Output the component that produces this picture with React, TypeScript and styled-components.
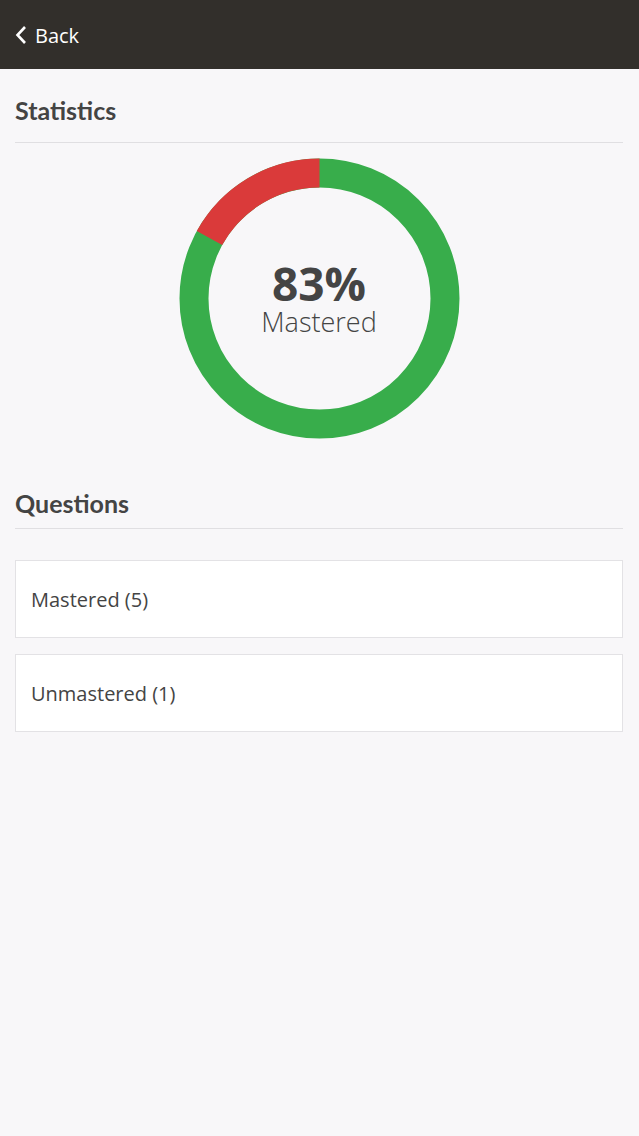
import { styled, createGlobalStyle } from "styled-components";

const GlobalStyle = createGlobalStyle`
  html, body {
    margin: 0;
    padding: 0;
    background: #f8f7f9;
  }
  body {
    font-family: "Open Sans", "Liberation Sans", sans-serif;
    color: #444;
  }
`;

const Donut = ({ percent }: { percent: number }) => {
  const r = 125.5;
  const c = 2 * Math.PI * r;
  const miss = c * (1 - percent / 100);
  return (
    <DonutWrap>
      <svg width="281" height="281" viewBox="0 0 281 281">
        <circle cx="140.5" cy="140.5" r={r} fill="none" stroke="#38ad4b" strokeWidth="29" />
        <circle
          cx="140.5"
          cy="140.5"
          r={r}
          fill="none"
          stroke="#da3a3a"
          strokeWidth="29"
          strokeDasharray={`${miss} ${c}`}
          transform="rotate(-90 140.5 140.5) scale(1 -1) translate(0 -281)"
        />
      </svg>
      <DonutLabel>
        <Percent>{percent}%</Percent>
        <Caption>Mastered</Caption>
      </DonutLabel>
    </DonutWrap>
  );
};

const App = () => {
  return (
    <Page>
      <GlobalStyle />
      <TopBar>
        <BackButton>
          <svg width="12" height="20" viewBox="0 0 12 20">
            <path d="M10 2 L2.5 10 L10 18" fill="none" stroke="#fff" strokeWidth="2.6" />
          </svg>
          Back
        </BackButton>
      </TopBar>
      <Content>
        <Heading>Statistics</Heading>
        <Donut percent={83} />
        <Heading $spaced>Questions</Heading>
        <List>
          <Item>Mastered (5)</Item>
          <Item>Unmastered (1)</Item>
        </List>
      </Content>
    </Page>
  );
};

const Page = styled.div`
  width: 100%;
  min-height: 1136px;
  background: #f8f7f9;
`;

const TopBar = styled.div`
  height: 69px;
  background-color: #322f2b;
  display: flex;
  align-items: center;
  padding: 0 15px;
  box-sizing: border-box;
`;

const BackButton = styled.div`
  display: flex;
  align-items: center;
  gap: 8px;
  color: #fff;
  font-size: 20px;
  margin-top: 1px;
`;

const Content = styled.div`
  padding: 0 16px 0 15px;
`;

const Heading = styled.h2<{ $spaced?: boolean }>`
  margin: ${(p) => (p.$spaced ? "49px" : "26px")} 0 0;
  padding-bottom: ${(p) => (p.$spaced ? "10px" : "17px")};
  font-family: Lato, "Liberation Sans", sans-serif;
  font-weight: 700;
  font-size: 25px;
  line-height: 30px;
  color: #444;
  border-bottom: 1px solid #e0dfe2;
`;

const DonutWrap = styled.div`
  position: relative;
  width: 281px;
  height: 281px;
  margin: 15px auto 0;
`;

const DonutLabel = styled.div`
  position: absolute;
  inset: 0;
  display: flex;
  flex-direction: column;
  align-items: center;
  justify-content: center;
  gap: 2px;
`;

const Percent = styled.div`
  font-size: 46px;
  font-weight: 700;
  line-height: 44px;
  color: #444;
`;

const Caption = styled.div`
  font-size: 27px;
  font-weight: 300;
  line-height: 30px;
  color: #444;
`;

const List = styled.div`
  display: flex;
  flex-direction: column;
  gap: 16px;
  margin-top: 31px;
`;

const Item = styled.div`
  height: 78px;
  box-sizing: border-box;
  background: #fff;
  border: 1px solid #e3e2e5;
  display: flex;
  align-items: center;
  padding: 0 15px;
  font-size: 20px;
  color: #444;
`;

export default App;
